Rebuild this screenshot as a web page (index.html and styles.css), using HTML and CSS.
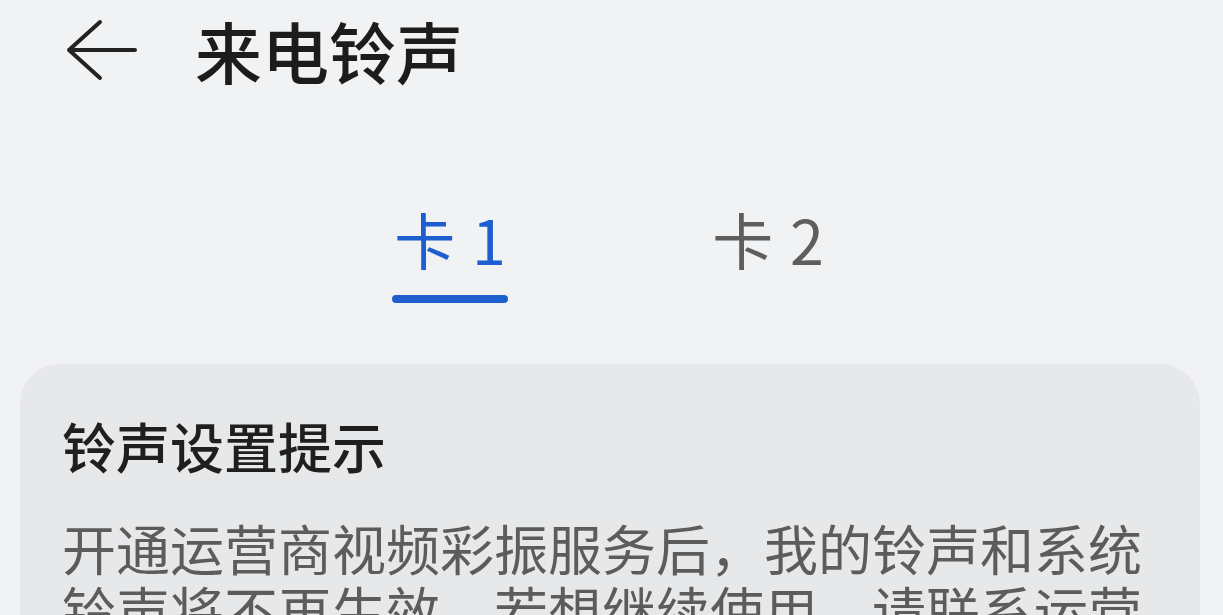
FILE: index.html
```html
<!DOCTYPE html>
<html lang="zh-CN">
<head>
<meta charset="utf-8">
<title>来电铃声</title>
<link rel="stylesheet" href="styles.css">
</head>
<body>
<div class="page">
  <header class="header">
    <svg class="back" width="72" height="64" viewBox="0 0 72 64" aria-hidden="true">
      <path d="M34 4 L3 32 L34 60 M3 32 H69" fill="none" stroke="#222" stroke-width="4" stroke-linecap="round" stroke-linejoin="round"/>
    </svg>
    <h1 class="title">来电铃声</h1>
  </header>
  <nav class="tabs">
    <div class="tab active"><span class="tab-label">卡 1</span><span class="tab-bar"></span></div>
    <div class="tab"><span class="tab-label">卡 2</span><span class="tab-bar"></span></div>
  </nav>
  <section class="card">
    <h2 class="card-title">铃声设置提示</h2>
    <p class="card-text">开通运营商视频彩振服务后，我的铃声和系统铃声将不再生效，若想继续使用，请联系运营商关闭视频彩振服务。</p>
  </section>
</div>
</body>
</html>
```

FILE: styles.css
```css
html, body {
  margin: 0;
  padding: 0;
  background: #f1f2f4;
}
body {
  font-family: "Noto Sans CJK SC", "Noto Sans", sans-serif;
  overflow: hidden;
  height: 615px;
}
.page {
  display: flex;
  flex-direction: column;
}
.header {
  display: flex;
  align-items: center;
  padding: 18px 0 0 66px;
}
.back {
  display: block;
  flex: none;
}
.title {
  margin: 0 0 0 57px;
  font-size: 67px;
  line-height: 64px;
  font-weight: 500;
  color: #1c1c1c;
}
.tabs {
  display: flex;
  justify-content: center;
  gap: 202px;
  margin-top: 127px;
  padding-right: 5px;
}
.tab {
  width: 116px;
  display: flex;
  flex-direction: column;
  align-items: center;
}
.tab-label {
  font-size: 61px;
  line-height: 60px;
  color: #5e5e5e;
  white-space: nowrap;
  word-spacing: 3px;
}
.tab-bar {
  margin-top: 26px;
  width: 116px;
  height: 8px;
  border-radius: 4px;
  background: transparent;
}
.tab.active .tab-label {
  color: #1d5fce;
}
.tab.active .tab-bar {
  background: #1d5fce;
}
.card {
  margin: 61px 23px 0 20px;
  background: #e7e8ea;
  border-radius: 40px;
  padding: 55px 42px 40px 42px;
}
.card-title {
  margin: 0;
  font-size: 54px;
  line-height: 54px;
  font-weight: 500;
  color: #1f1f1f;
}
.card-text {
  margin: 44px 0 0 0;
  font-size: 54px;
  line-height: 62px;
  color: #5c5c5c;
}
```
